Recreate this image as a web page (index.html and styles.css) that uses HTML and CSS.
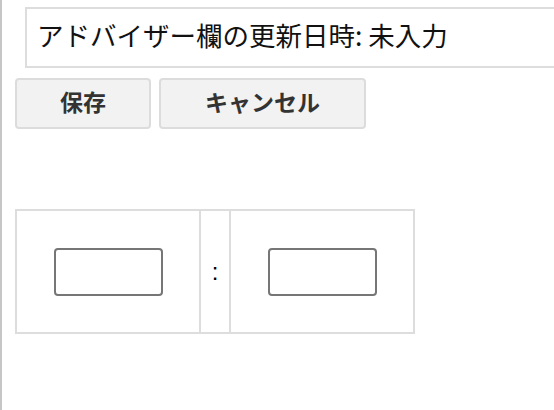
FILE: index.html
```html
<!DOCTYPE html>
<html lang="ja">
<head>
<meta charset="utf-8">
<title>アドバイザー欄</title>
<link rel="stylesheet" href="styles.css">
</head>
<body>
<div class="page">
  <div class="status">アドバイザー欄の更新日時: 未入力</div>
  <div class="actions">
    <button class="btn btn-save" type="button">保存</button>
    <button class="btn btn-cancel" type="button">キャンセル</button>
  </div>
  <div class="time-row">
    <div class="time-cell"><input class="time-input" type="text"></div>
    <div class="sep-cell">:</div>
    <div class="time-cell"><input class="time-input" type="text"></div>
  </div>
</div>
</body>
</html>
```
FILE: styles.css
```css
html, body {
  margin: 0;
  padding: 0;
  height: 100%;
  overflow: hidden;
  background: #ffffff;
}
body {
  border-left: 2px solid #c6c6c6;
  box-sizing: border-box;
  font-family: "Noto Sans CJK JP", "Noto Sans", sans-serif;
  color: #111;
}
.page {
  padding: 7px 0 0 13px;
}
.status {
  margin-left: 10px;
  height: 61px;
  box-sizing: border-box;
  border: 2px solid #dddddd;
  border-right: none;
  display: flex;
  align-items: center;
  padding: 0 0 4px 10px;
  font-size: 26.5px;
  line-height: 1;
  color: #111;
  white-space: nowrap;
  overflow: hidden;
}
.actions {
  margin-top: 10px;
  display: flex;
  gap: 8px;
}
.btn {
  height: 51px;
  box-sizing: border-box;
  border: 2px solid #dcdcdc;
  border-radius: 4px;
  background: #f2f2f2;
  font-family: "Noto Sans CJK JP", "Noto Sans", sans-serif;
  font-weight: bold;
  font-size: 23px;
  line-height: 1;
  color: #333;
  padding: 0 0 4px 0;
}
.btn-save { width: 136px; }
.btn-cancel { width: 207px; }
.time-row {
  margin-top: 80px;
  width: 400px;
  height: 125px;
  box-sizing: border-box;
  border: 2px solid #dddddd;
  display: flex;
}
.time-cell {
  width: 182px;
  display: flex;
  align-items: center;
  justify-content: center;
}
.time-cell + .sep-cell,
.sep-cell + .time-cell {
  border-left: 2px solid #dddddd;
}
.sep-cell {
  width: 28px;
  display: flex;
  align-items: center;
  justify-content: center;
  font-size: 24px;
  color: #000;
  font-family: "Liberation Sans", sans-serif;
}
.time-input {
  width: 109px;
  height: 48px;
  box-sizing: border-box;
  border: 2px solid #767676;
  border-radius: 4px;
  margin: 0;
  padding: 0;
  background: #fff;
}
```
